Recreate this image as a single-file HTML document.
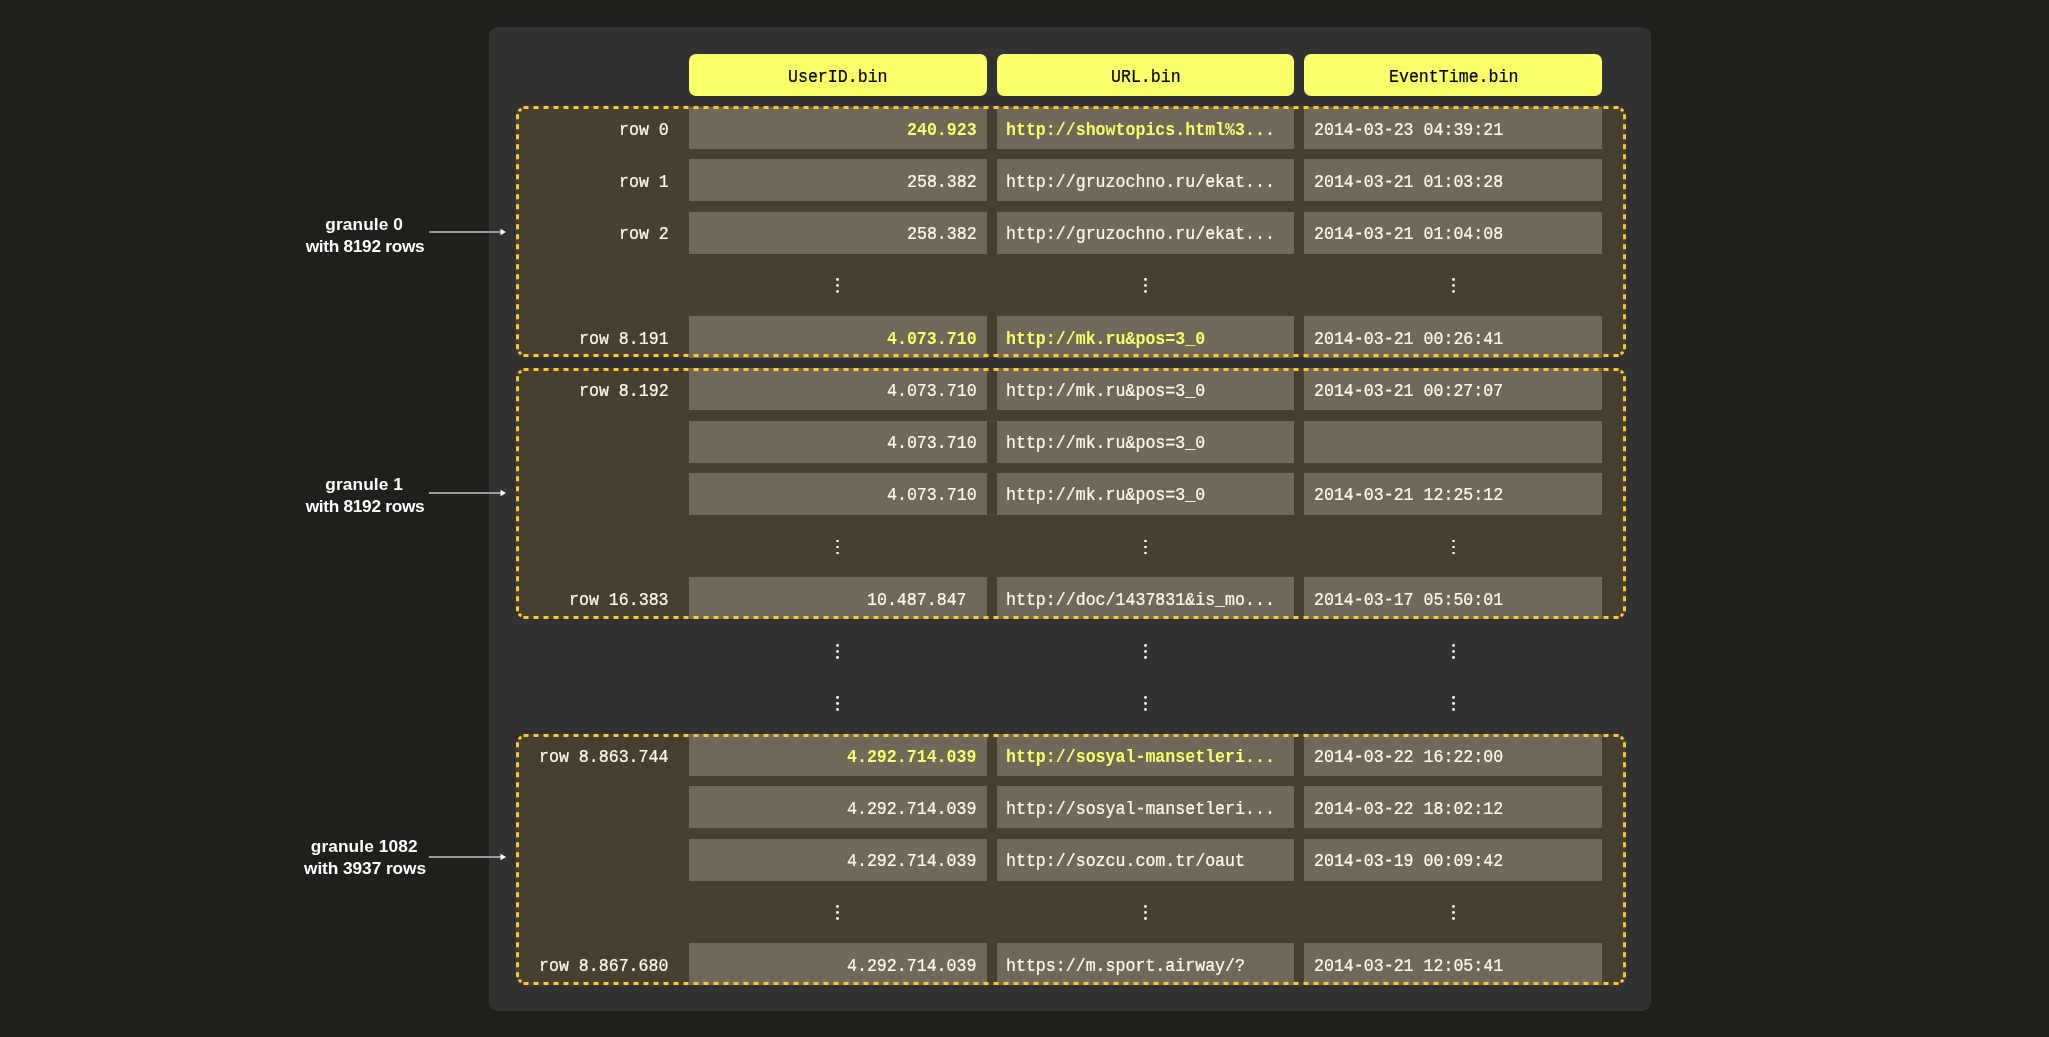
<!DOCTYPE html>
<html><head><meta charset="utf-8"><style>
html,body{margin:0;padding:0;}
body{width:2049px;height:1037px;background:#1f1f1c;position:relative;overflow:hidden;}
.a{position:absolute;}
.panel{left:489px;top:27px;width:1162px;height:984px;background:#323232;border-radius:9px;}
.hdr{top:54px;width:297.8px;height:42px;background:#faff69;border-radius:7px;color:#000;
 font:16.6px/42px "Liberation Mono",monospace;text-align:center;}
.box{left:516px;width:1110px;background:#48402f;border-radius:10px;}
.cell{width:297.8px;height:42px;background:#70695a;box-sizing:border-box;padding:0 9px;
 font:16.6px/42px "Liberation Mono",monospace;color:#fffbeb;white-space:pre;overflow:hidden;}
.r{text-align:right;}
.t{display:inline-block;transform:translateY(var(--ty)) scaleY(var(--sy));transform-origin:50% 50%;-webkit-text-stroke:var(--ts) currentColor;will-change:transform;}
:root{--ty:2.1px;--sy:1.1;--ts:0.2px;}
.hl{color:#faff69;font-weight:bold;}
.hl .t{-webkit-text-stroke:0;}
.hdr .t{--ty:3px;}
.lab{left:459.5px;width:209px;text-align:right;height:42px;font:16.6px/42px "Liberation Mono",monospace;color:#fffbeb;white-space:pre;}
.dot{width:2.8px;height:2.8px;border-radius:50%;background:#fffbeb;}
.gl{left:265px;width:200px;text-align:center;color:#fff;font:bold 17.3px/22px "Liberation Sans",sans-serif;white-space:pre;}
svg{position:absolute;left:0;top:0;}
</style></head><body>
<div class="a panel"></div>
<div class="a hdr" style="left:688.8px"><span class="t">UserID.bin</span></div>
<div class="a hdr" style="left:996.6px"><span class="t">URL.bin</span></div>
<div class="a hdr" style="left:1304.4px"><span class="t">EventTime.bin</span></div>
<div class="a box" style="top:106.00px;height:251.00px"></div>
<div class="a box" style="top:368.00px;height:251.00px"></div>
<div class="a box" style="top:734.00px;height:251.00px"></div>
<div class="a lab" style="top:107.00px;--ty:2.1px"><span class="t">row 0</span></div><div class="a cell r hl" style="left:688.8px;top:107.00px;padding-right:10px;--ty:2.1px"><span class="t">240.923</span></div><div class="a cell hl" style="left:996.6px;top:107.00px;padding-left:9.9px;--ty:2.1px"><span class="t">http://showtopics.html%3...</span></div><div class="a cell" style="left:1304.4px;top:107.00px;padding-left:9.6px;--ty:2.1px"><span class="t">2014-03-23 04:39:21</span></div>
<div class="a lab" style="top:159.25px;--ty:2.1px"><span class="t">row 1</span></div><div class="a cell r" style="left:688.8px;top:159.25px;padding-right:10px;--ty:2.1px"><span class="t">258.382</span></div><div class="a cell" style="left:996.6px;top:159.25px;padding-left:9.9px;--ty:2.1px"><span class="t">http://gruzochno.ru/ekat...</span></div><div class="a cell" style="left:1304.4px;top:159.25px;padding-left:9.6px;--ty:2.1px"><span class="t">2014-03-21 01:03:28</span></div>
<div class="a lab" style="top:211.50px;--ty:1.6px"><span class="t">row 2</span></div><div class="a cell r" style="left:688.8px;top:211.50px;padding-right:10px;--ty:1.6px"><span class="t">258.382</span></div><div class="a cell" style="left:996.6px;top:211.50px;padding-left:9.9px;--ty:1.6px"><span class="t">http://gruzochno.ru/ekat...</span></div><div class="a cell" style="left:1304.4px;top:211.50px;padding-left:9.6px;--ty:1.6px"><span class="t">2014-03-21 01:04:08</span></div>
<div class="a dot" style="left:836.3px;top:278.35px"></div><div class="a dot" style="left:836.3px;top:284.35px"></div><div class="a dot" style="left:836.3px;top:290.35px"></div><div class="a dot" style="left:1144.1px;top:278.35px"></div><div class="a dot" style="left:1144.1px;top:284.35px"></div><div class="a dot" style="left:1144.1px;top:290.35px"></div><div class="a dot" style="left:1451.9px;top:278.35px"></div><div class="a dot" style="left:1451.9px;top:284.35px"></div><div class="a dot" style="left:1451.9px;top:290.35px"></div>
<div class="a lab" style="top:316.00px;--ty:2.1px"><span class="t">row 8.191</span></div><div class="a cell r hl" style="left:688.8px;top:316.00px;padding-right:10px;--ty:2.1px"><span class="t">4.073.710</span></div><div class="a cell hl" style="left:996.6px;top:316.00px;padding-left:9.9px;--ty:2.1px"><span class="t">http://mk.ru&amp;pos=3_0</span></div><div class="a cell" style="left:1304.4px;top:316.00px;padding-left:9.6px;--ty:2.1px"><span class="t">2014-03-21 00:26:41</span></div>
<div class="a lab" style="top:368.25px;--ty:2.1px"><span class="t">row 8.192</span></div><div class="a cell r" style="left:688.8px;top:368.25px;padding-right:10px;--ty:2.1px"><span class="t">4.073.710</span></div><div class="a cell" style="left:996.6px;top:368.25px;padding-left:9.9px;--ty:2.1px"><span class="t">http://mk.ru&amp;pos=3_0</span></div><div class="a cell" style="left:1304.4px;top:368.25px;padding-left:9.6px;--ty:2.1px"><span class="t">2014-03-21 00:27:07</span></div>
<div class="a cell r" style="left:688.8px;top:420.50px;padding-right:10px;--ty:1.6px"><span class="t">4.073.710</span></div><div class="a cell" style="left:996.6px;top:420.50px;padding-left:9.9px;--ty:1.6px"><span class="t">http://mk.ru&amp;pos=3_0</span></div><div class="a cell" style="left:1304.4px;top:420.50px;padding-left:9.6px;--ty:1.6px"><span class="t"></span></div>
<div class="a cell r" style="left:688.8px;top:472.75px;padding-right:10px;--ty:1.35px"><span class="t">4.073.710</span></div><div class="a cell" style="left:996.6px;top:472.75px;padding-left:9.9px;--ty:1.35px"><span class="t">http://mk.ru&amp;pos=3_0</span></div><div class="a cell" style="left:1304.4px;top:472.75px;padding-left:9.6px;--ty:1.35px"><span class="t">2014-03-21 12:25:12</span></div>
<div class="a dot" style="left:836.3px;top:539.60px"></div><div class="a dot" style="left:836.3px;top:545.60px"></div><div class="a dot" style="left:836.3px;top:551.60px"></div><div class="a dot" style="left:1144.1px;top:539.60px"></div><div class="a dot" style="left:1144.1px;top:545.60px"></div><div class="a dot" style="left:1144.1px;top:551.60px"></div><div class="a dot" style="left:1451.9px;top:539.60px"></div><div class="a dot" style="left:1451.9px;top:545.60px"></div><div class="a dot" style="left:1451.9px;top:551.60px"></div>
<div class="a lab" style="top:577.25px;--ty:2.1px"><span class="t">row 16.383</span></div><div class="a cell r" style="left:688.8px;top:577.25px;padding-right:10px;--ty:2.1px"><span class="t">10.487.847&nbsp;</span></div><div class="a cell" style="left:996.6px;top:577.25px;padding-left:9.9px;--ty:2.1px"><span class="t">http://doc/1437831&amp;is_mo...</span></div><div class="a cell" style="left:1304.4px;top:577.25px;padding-left:9.6px;--ty:2.1px"><span class="t">2014-03-17 05:50:01</span></div>
<div class="a dot" style="left:836.3px;top:644.10px"></div><div class="a dot" style="left:836.3px;top:650.10px"></div><div class="a dot" style="left:836.3px;top:656.10px"></div><div class="a dot" style="left:1144.1px;top:644.10px"></div><div class="a dot" style="left:1144.1px;top:650.10px"></div><div class="a dot" style="left:1144.1px;top:656.10px"></div><div class="a dot" style="left:1451.9px;top:644.10px"></div><div class="a dot" style="left:1451.9px;top:650.10px"></div><div class="a dot" style="left:1451.9px;top:656.10px"></div>
<div class="a dot" style="left:836.3px;top:696.35px"></div><div class="a dot" style="left:836.3px;top:702.35px"></div><div class="a dot" style="left:836.3px;top:708.35px"></div><div class="a dot" style="left:1144.1px;top:696.35px"></div><div class="a dot" style="left:1144.1px;top:702.35px"></div><div class="a dot" style="left:1144.1px;top:708.35px"></div><div class="a dot" style="left:1451.9px;top:696.35px"></div><div class="a dot" style="left:1451.9px;top:702.35px"></div><div class="a dot" style="left:1451.9px;top:708.35px"></div>
<div class="a lab" style="top:734.00px;--ty:2.1px"><span class="t">row 8.863.744</span></div><div class="a cell r hl" style="left:688.8px;top:734.00px;padding-right:10px;--ty:2.1px"><span class="t">4.292.714.039</span></div><div class="a cell hl" style="left:996.6px;top:734.00px;padding-left:9.9px;--ty:2.1px"><span class="t">http://sosyal-mansetleri...</span></div><div class="a cell" style="left:1304.4px;top:734.00px;padding-left:9.6px;--ty:2.1px"><span class="t">2014-03-22 16:22:00</span></div>
<div class="a cell r" style="left:688.8px;top:786.25px;padding-right:10px;--ty:2.1px"><span class="t">4.292.714.039</span></div><div class="a cell" style="left:996.6px;top:786.25px;padding-left:9.9px;--ty:2.1px"><span class="t">http://sosyal-mansetleri...</span></div><div class="a cell" style="left:1304.4px;top:786.25px;padding-left:9.6px;--ty:2.1px"><span class="t">2014-03-22 18:02:12</span></div>
<div class="a cell r" style="left:688.8px;top:838.50px;padding-right:10px;--ty:1.6px"><span class="t">4.292.714.039</span></div><div class="a cell" style="left:996.6px;top:838.50px;padding-left:9.9px;--ty:1.6px"><span class="t">http://sozcu.com.tr/oaut</span></div><div class="a cell" style="left:1304.4px;top:838.50px;padding-left:9.6px;--ty:1.6px"><span class="t">2014-03-19 00:09:42</span></div>
<div class="a dot" style="left:836.3px;top:905.35px"></div><div class="a dot" style="left:836.3px;top:911.35px"></div><div class="a dot" style="left:836.3px;top:917.35px"></div><div class="a dot" style="left:1144.1px;top:905.35px"></div><div class="a dot" style="left:1144.1px;top:911.35px"></div><div class="a dot" style="left:1144.1px;top:917.35px"></div><div class="a dot" style="left:1451.9px;top:905.35px"></div><div class="a dot" style="left:1451.9px;top:911.35px"></div><div class="a dot" style="left:1451.9px;top:917.35px"></div>
<div class="a lab" style="top:943.00px;--ty:2.1px"><span class="t">row 8.867.680</span></div><div class="a cell r" style="left:688.8px;top:943.00px;padding-right:10px;--ty:2.1px"><span class="t">4.292.714.039</span></div><div class="a cell" style="left:996.6px;top:943.00px;padding-left:9.9px;--ty:2.1px"><span class="t">https://m.sport.airway/?</span></div><div class="a cell" style="left:1304.4px;top:943.00px;padding-left:9.6px;--ty:2.1px"><span class="t">2014-03-21 12:05:41</span></div>
<svg width="2049" height="1037">
<path d="M523.5 107.5H1618.5 M523.5 355.5H1618.5 M517.5 114.2V349.5 M1624.5 114.2V349.5" fill="none" stroke="#fdc72e" stroke-width="3" stroke-dasharray="5 5"/>
<path d="M518.97 111.22A8.5 8.5 0 0 1 521.22 108.97 M1620.78 108.97A8.5 8.5 0 0 1 1623.03 111.22 M1623.03 351.78A8.5 8.5 0 0 1 1620.78 354.03 M521.22 354.03A8.5 8.5 0 0 1 518.97 351.78" fill="none" stroke="#fdc72e" stroke-width="3"/>
<path d="M523.5 369.5H1618.5 M523.5 617.5H1618.5 M517.5 376.2V611.5 M1624.5 376.2V611.5" fill="none" stroke="#fdc72e" stroke-width="3" stroke-dasharray="5 5"/>
<path d="M518.97 373.22A8.5 8.5 0 0 1 521.22 370.97 M1620.78 370.97A8.5 8.5 0 0 1 1623.03 373.22 M1623.03 613.78A8.5 8.5 0 0 1 1620.78 616.03 M521.22 616.03A8.5 8.5 0 0 1 518.97 613.78" fill="none" stroke="#fdc72e" stroke-width="3"/>
<path d="M523.5 735.5H1618.5 M523.5 983.5H1618.5 M517.5 742.2V977.5 M1624.5 742.2V977.5" fill="none" stroke="#fdc72e" stroke-width="3" stroke-dasharray="5 5"/>
<path d="M518.97 739.22A8.5 8.5 0 0 1 521.22 736.97 M1620.78 736.97A8.5 8.5 0 0 1 1623.03 739.22 M1623.03 979.78A8.5 8.5 0 0 1 1620.78 982.03 M521.22 982.03A8.5 8.5 0 0 1 518.97 979.78" fill="none" stroke="#fdc72e" stroke-width="3"/>
<rect x="429" y="231.0" width="73" height="2" fill="#9b9b9b"/>
<path d="M500.5 228.8 L506 232.0 L500.5 235.2 Z" fill="#fff"/>
<rect x="429" y="492.0" width="73" height="2" fill="#9b9b9b"/>
<path d="M500.5 489.8 L506 493.0 L500.5 496.2 Z" fill="#fff"/>
<rect x="429" y="856.0" width="73" height="2" fill="#9b9b9b"/>
<path d="M500.5 853.8 L506 857.0 L500.5 860.2 Z" fill="#fff"/>
</svg><div class="a gl" style="top:212.7px"><span style="letter-spacing:0.1px;position:relative;left:-0.8px">granule 0</span>
<span style="letter-spacing:-0.3px">with 8192 rows</span></div>
<div class="a gl" style="top:472.7px"><span style="letter-spacing:0.1px;position:relative;left:-0.8px">granule 1</span>
<span style="letter-spacing:-0.3px">with 8192 rows</span></div>
<div class="a gl" style="top:835.0px"><span style="letter-spacing:0.1px;position:relative;left:-0.8px">granule 1082</span>
<span style="letter-spacing:-0.07px">with 3937 rows</span></div>
</body></html>
